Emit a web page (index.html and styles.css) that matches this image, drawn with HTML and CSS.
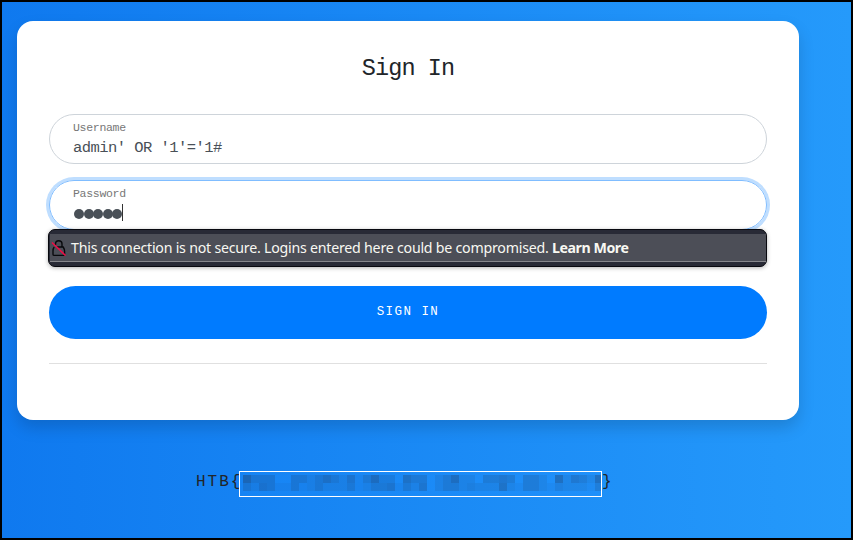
FILE: index.html
```html
<!DOCTYPE html>
<html lang="en">
<head>
<meta charset="utf-8">
<title>Sign In</title>
<link rel="stylesheet" href="styles.css">
</head>
<body>
<main class="card">
  <h1 class="title">Sign In</h1>
  <div class="field">
    <span class="label">Username</span>
    <span class="value">admin' OR '1'='1#</span>
  </div>
  <div class="field focused">
    <span class="label">Password</span>
    <span class="dots"><i></i><i></i><i></i><i></i><i></i><b class="caret"></b></span>
    <div class="warning">
      <div class="warning-row">
        <svg class="lock" width="16" height="18" viewBox="0 0 16 18" fill="none" stroke="#08090c" stroke-width="1.4">
          <path d="M4.500 6V4.800Q4.500 1.700 7.700 1.700T11 4.800V8"/>
          <path d="M6 8h6.200q1.400 2.200 1.400 4.400v2.800q0 1.200-1.200 1.200H3.200Q2 16.400 2 15.200v-3Q2 9.500 3.200 8"/>
          <path d="M1 3.500 14.500 16.500" stroke="#f00b46" stroke-width="1.600"/>
        </svg>
        <span class="message">This connection is not secure. Logins entered here could be compromised. <strong>Learn More</strong></span>
      </div>
    </div>
  </div>
  <button class="submit" type="button">SIGN IN</button>
  <hr class="rule">
</main>
<div class="flag"><span>HTB{</span><div class="redacted"><div class="mosaic" id="mosaic"></div></div><span>}</span></div>
<script src="mosaic.js"></script>
</body>
</html>
```
FILE: mosaic.js
```js
// Shade level of each cell, row by row.
const rows = [
  '844400442464251473306440247220445404420725427',
  '425411412422241244514250244232226214421322214'
];
const mosaic = document.getElementById('mosaic');
for (const level of rows.join('')) {
  const cell = document.createElement('i');
  cell.style.opacity = level * 0.055;
  mosaic.append(cell);
}
```
FILE: styles.css
```css
* { box-sizing: border-box; }
body {
  margin: 0;
  height: 540px;
  padding: 19px 52px 0 15px;
  border: 2px solid #000;
  overflow: hidden;
  background: linear-gradient(to right, #0f79ef, #259aff);
  background: linear-gradient(to right, #0f79ef, #259afb);
  font-family: "Liberation Mono", monospace;
}
.card {
  height: 399px;
  padding: 32px 32px 0;
  border-radius: 16px;
  background: #fff;
  box-shadow: 0 8px 16px rgba(0, 0, 0, .15);
}
.title {
  margin: 0 0 32px;
  padding-top: 1px;
  height: 29px;
  line-height: 29px;
  text-align: center;
  font-size: 23.5px;
  font-weight: 400;
  letter-spacing: -.9px;
  color: #212529;
}
.field {
  position: relative;
  display: flex;
  flex-direction: column;
  height: 50px;
  margin-bottom: 16px;
  padding: 6px 23px 0;
  border: 1px solid #ced4da;
  border-radius: 25px;
}
.focused {
  border-color: #80bdff;
  box-shadow: 0 0 0 3px #bfdeff;
}
.label {
  height: 14px;
  line-height: 14px;
  font-size: 11.5px;
  letter-spacing: -.3px;
  color: #777;
}
.value {
  margin-top: 3px;
  line-height: 20px;
  font-size: 15.5px;
  letter-spacing: -.55px;
  color: #495057;
  white-space: pre;
}
.dots {
  display: flex;
  align-items: center;
  height: 18px;
  margin: 4px 0 0 1px;
}
.dots i {
  width: 10px;
  height: 10px;
  margin-right: -.4px;
  border-radius: 50%;
  background: #495057;
}
.caret {
  width: 1px;
  height: 17px;
  margin: -3px 0 0 0;
  background: #333;
}
.warning {
  position: absolute;
  top: 48px;
  left: -2px;
  width: 719px;
  height: 38px;
  padding: 4px 0 4px 1px;
  border: 1px solid #08090f;
  border-radius: 7px;
  background: #282a36;
  box-shadow: 0 1px 4px rgba(0, 0, 0, .3);
}
.warning-row {
  display: flex;
  align-items: center;
  height: 28px;
  border-bottom: 1px solid #85868b;
  background: #4c4e57;
}
.lock { flex: none; margin-left: 1px; }
.message {
  margin-left: 4px;
  font: 14.2px/20px "Noto Sans", sans-serif;
  letter-spacing: -.23px;
  color: #f8f8f2;
  white-space: nowrap;
}
.message strong { letter-spacing: -.45px; }
.submit {
  display: block;
  width: 100%;
  height: 53px;
  margin: 56px 0 24px;
  padding: 0 0 1px;
  border: 0;
  border-radius: 27px;
  background: #007bff;
  color: #fff;
  font: 12.5px "Liberation Mono", monospace;
  letter-spacing: 1.45px;
}
.rule {
  margin: 0;
  border: 0;
  border-top: 1px solid #e0e0e0;
}
.flag {
  display: flex;
  height: 26px;
  margin: 51px 0 0 179px;
  line-height: 22px;
  font-size: 16px;
  letter-spacing: 2px;
  color: #212529;
}
.flag span:first-child { width: 43px; }
.redacted {
  z-index: 1;
  width: 363px;
  padding: 3px;
  border: 1px solid #fff;
  background: linear-gradient(to right, #1684f4, #1f90fa);
}
.mosaic {
  display: grid;
  grid-template-columns: repeat(44, 8px) 6px;
  grid-auto-rows: 8px;
}
.mosaic i { background: #203f68; }
```
